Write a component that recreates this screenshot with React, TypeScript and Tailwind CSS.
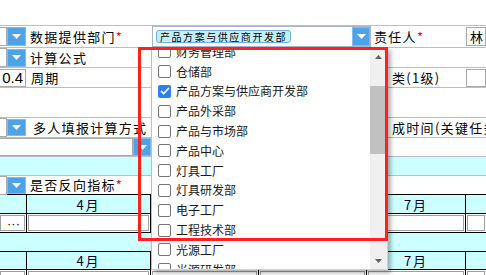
import React from 'react';

const depts = [
  '财务管理部',
  '仓储部',
  '产品方案与供应商开发部',
  '产品外采部',
  '产品与市场部',
  '产品中心',
  '灯具工厂',
  '灯具研发部',
  '电子工厂',
  '工程技术部',
  '光源工厂',
  '光源研发部',
];

function Tri() {
  return (
    <svg width="9" height="5" viewBox="0 0 9 5">
      <path d="M0 0h9L4.5 5z" fill="#fff" />
    </svg>
  );
}

function Drop({ className }: { className: string }) {
  return (
    <div className={`flex shrink-0 items-center justify-center border border-[#7fbcec] bg-[#4ea3e6] ${className}`}>
      <Tri />
    </div>
  );
}

function Stub() {
  return <div className="h-[19px] w-[7px] shrink-0 border border-l-0 border-[#a9a9a9] bg-white" />;
}

function Star() {
  return <span className="text-[#ff0000]">*</span>;
}

function Label({ className, children }: { className: string; children: React.ReactNode }) {
  return (
    <div className={`shrink-0 whitespace-nowrap text-[13px] leading-[16px] tracking-[1.3px] text-black ${className}`}>
      {children}
    </div>
  );
}

function Check({ on }: { on: boolean }) {
  if (on) {
    return (
      <div className="flex h-[13px] w-[13px] shrink-0 items-center justify-center rounded-[2px] bg-[#2f80e8]">
        <svg width="10" height="8" viewBox="0 0 10 8">
          <path d="M1 4l2.6 2.6L9 1" fill="none" stroke="#fff" strokeWidth="1.7" />
        </svg>
      </div>
    );
  }
  return <div className="h-[13px] w-[13px] shrink-0 rounded-[2px] border border-[#767676] bg-white" />;
}

function ArrowSmall({ up }: { up: boolean }) {
  return (
    <svg width="7" height="4" viewBox="0 0 7 4">
      <path d={up ? 'M0 4h7L3.5 0z' : 'M0 0h7L3.5 4z'} fill="#606060" />
    </svg>
  );
}

function MonthRow({ className }: { className: string }) {
  return (
    <div className={`flex border-b border-black bg-[#ccffff] text-[13px] leading-none tracking-[2px] text-[#000033] ${className}`}>
      <div className="w-[27px] shrink-0 border-r border-black" />
      <div className="flex w-[124px] shrink-0 items-center justify-center border-r border-black">4月</div>
      <div className="w-[108px] shrink-0 border-r border-black" />
      <div className="w-[108px] shrink-0 border-r border-black" />
      <div className="flex w-[99px] shrink-0 items-center justify-center border-r border-black">7月</div>
      <div className="flex-1" />
    </div>
  );
}

function InputRow({ className, dots }: { className: string; dots: boolean }) {
  return (
    <div className={`flex bg-white ${className}`}>
      <div className="w-[27px] shrink-0 border-r border-black py-px pr-px">
        <div className="flex h-full items-center justify-end border border-[#a0a0a0] pr-[4px] font-['Liberation_Sans',sans-serif] text-[13px] leading-none">
          {dots ? '···' : ''}
        </div>
      </div>
      <div className="w-[124px] shrink-0 border-r border-black p-px">
        <div className="h-full border border-[#a0a0a0]" />
      </div>
      <div className="w-[108px] shrink-0 border-r border-black p-px">
        <div className="h-full border border-[#a0a0a0]" />
      </div>
      <div className="w-[108px] shrink-0 border-r border-black p-px">
        <div className="h-full border border-[#a0a0a0]" />
      </div>
      <div className="w-[99px] shrink-0 border-r border-black p-px">
        <div className="h-full border border-[#a0a0a0]" />
      </div>
      <div className="flex-1 p-px">
        <div className="h-full border border-[#a0a0a0]" />
      </div>
    </div>
  );
}

export default function App() {
  return (
    <div className="relative h-[275px] w-[486px] overflow-hidden bg-white font-['Noto_Sans_CJK_SC',sans-serif]">
      <div className="h-[26px] border-b border-[#babdca]" />

      {/* 数据提供部门 / 责任人 */}
      <div className="flex h-[22px] items-center border-b border-[#babdca]">
        <Stub />
        <Drop className="h-[19px] w-[19px]" />
        <Label className="w-[126px] pl-[4px]">
          数据提供部门<Star />
        </Label>
        <div className="flex h-[21px] w-[219px] shrink-0 items-center border border-[#a9b4c6] pl-[3px]">
          <span className="rounded-[3px] border border-[#6cb2d8] bg-[#c4eefc] px-[3px] text-[10px] leading-[11px] tracking-[1.55px] text-black">
            产品方案与供应商开发部
          </span>
          <Drop className="ml-auto h-[19px] w-[18px]" />
        </div>
        <Label className="w-[95px] pl-[3px]">
          责任人<Star />
        </Label>
        <div className="flex h-[19px] flex-1 items-center overflow-hidden whitespace-nowrap border border-[#a9a9a9] pl-[3px] text-[13px] leading-none">
          林
        </div>
      </div>

      {/* 计算公式 */}
      <div className="flex h-[20px] items-center border-b border-[#babdca]">
        <Stub />
        <Drop className="h-[18px] w-[19px]" />
        <Label className="w-[126px] pl-[4px]">计算公式</Label>
      </div>

      {/* 周期 / 分类 */}
      <div className="flex h-[20px] items-center border-b border-[#babdca]">
        <div className="flex h-[18px] w-[26px] shrink-0 items-center justify-end border border-l-0 border-[#a9a9a9] pr-[2px] font-['Liberation_Sans',sans-serif] text-[15px] leading-none">
          0.4
        </div>
        <Label className="w-[126px] pl-[5px]">周期</Label>
        <div className="w-[219px] shrink-0" />
        <Label className="w-[95px] pl-[21px]">类(1级)</Label>
        <div className="h-[18px] flex-1 border border-[#a9a9a9]" />
      </div>

      <div className="h-[30px] border-b border-[#babdca]" />

      {/* 多人填报计算方式 */}
      <div className="flex h-[20px] items-center border-b border-[#babdca]">
        <Stub />
        <Drop className="h-[17px] w-[19px]" />
        <Label className="w-[126px] pl-[7px]">多人填报计算方式</Label>
        <div className="w-[219px] shrink-0" />
        <Label className="pl-[21px]">成时间(关键任务)</Label>
      </div>

      <div className="flex h-[19px] items-center border-b border-[#babdca]">
        <div className="h-[18px] w-[133px] shrink-0 border border-l-0 border-[#a9a9a9]" />
        <Drop className="h-[18px] w-[18px]" />
      </div>

      <div className="h-[19px] border-b border-[#babdca] bg-[#ccffff]" />

      {/* 是否反向指标 */}
      <div className="flex h-[19px] items-center border-b border-black">
        <Stub />
        <Drop className="h-[17px] w-[19px]" />
        <Label className="w-[126px] pl-[4px]">
          是否反向指标<Star />
        </Label>
      </div>

      <MonthRow className="h-[19px]" />
      <InputRow className="h-[19px] border-b border-black" dots />
      <div className="h-[19px] border-b border-black bg-[#ccffff]" />
      <MonthRow className="h-[18px]" />
      <InputRow className="h-[19px]" dots={false} />

      {/* dropdown list */}
      <div className="absolute left-[151px] top-[47px] flex h-[223px] w-[237px] border border-l-[#a6c4ea] border-[#d0d0d0] bg-white shadow-[3px_3px_4px_rgba(0,0,0,0.3)]">
        <div className="flex-1 overflow-hidden">
          <div className="mt-[-6px]">
            {depts.map((d, i) => (
              <div key={d} className="flex h-[19.8px] items-center gap-[5px] pl-[6px] text-[12px] leading-none text-[#1a1a1a]">
                <Check on={i === 2} />
                <span>{d}</span>
              </div>
            ))}
          </div>
        </div>
        <div className="flex w-[17px] shrink-0 flex-col bg-[#f0f0f0]">
          <div className="flex h-[17px] items-center justify-center">
            <ArrowSmall up />
          </div>
          <div className="mt-[21px] h-[68px] bg-[#c1c1c1]" />
          <div className="mt-auto flex h-[17px] items-center justify-center">
            <ArrowSmall up={false} />
          </div>
        </div>
      </div>

      {/* annotation */}
      <div className="absolute left-[138px] top-[47px] h-[194px] w-[250px] border-[3px] border-[#ff2020]" />
    </div>
  );
}
